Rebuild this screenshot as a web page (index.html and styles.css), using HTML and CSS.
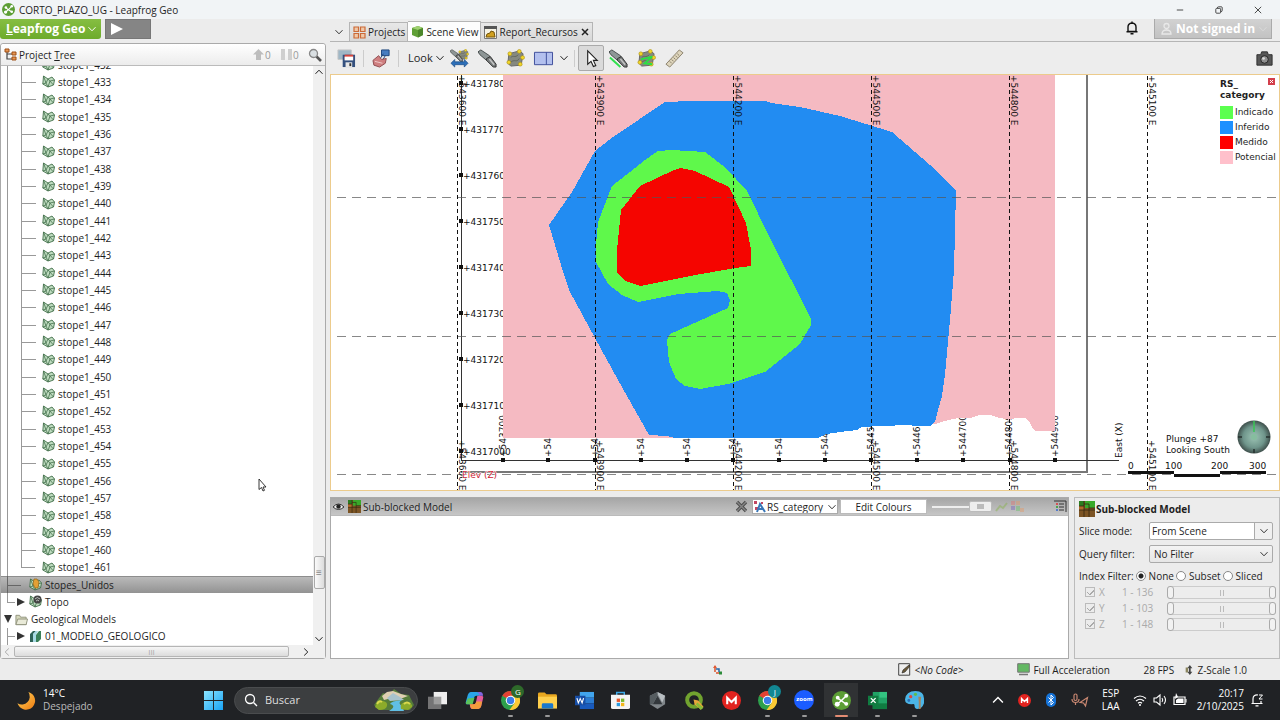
FILE: index.html
```html
<!DOCTYPE html>
<html lang="en">
<head>
<meta charset="utf-8">
<title>CORTO_PLAZO_UG - Leapfrog Geo</title>
<link rel="stylesheet" href="styles.css">
</head>
<body>
<svg class="defs" aria-hidden="true">
  <defs>
    <linearGradient id="gold" x1="0" y1="0" x2="1" y2="1"><stop offset="0" stop-color="#ffd45a"/><stop offset="1" stop-color="#ee7c12"/></linearGradient>
    <linearGradient id="win" x1="0" y1="0" x2="1" y2="1"><stop offset="0" stop-color="#8be4ff"/><stop offset="1" stop-color="#18a3f5"/></linearGradient>
    <radialGradient id="ball" cx=".5" cy=".5" r=".5"><stop offset="0" stop-color="#9cc4b4"/><stop offset=".65" stop-color="#6f958b"/><stop offset="1" stop-color="#3f504c"/></radialGradient>
    <symbol id="chev" viewBox="0 0 10 10"><path d="M1.500 3.200 5 6.800l3.500-3.600" fill="none" stroke="currentColor"/></symbol>
    <symbol id="mesh" viewBox="0 0 13 13"><path d="M1.500 1 6 4l4-2 2.500 3-1 5L6 12 .8 9z" fill="#bfdcc0" stroke="#44704c" stroke-width=".9"/><path d="M1.500 1 4 8l2-4 5.500 6M.8 9 4 8l2 4 2-6 4.500-1" fill="none" stroke="#44704c" stroke-width=".8"/></symbol>
    <symbol id="frog" viewBox="0 0 20 20"><circle cx="10" cy="10" r="10" fill="#5c9e35"/><path d="m5 14.500 5-4.500 5-5M6 7.500 9.500 10l5 3.500" stroke="#fff" stroke-width="1.600" fill="none"/><circle cx="6" cy="7" r="2" fill="#fff"/><circle cx="15" cy="5" r="2" fill="#fff"/><circle cx="15" cy="13.500" r="2" fill="#fff"/><circle cx="5.500" cy="14" r="2.600" fill="#fff"/></symbol>
    <symbol id="blocks" viewBox="0 0 16 16"><path d="M0 0h16v16H0z" fill="#7c5424"/><path d="M6 0h10v7H6z" fill="#39a92a"/><path d="M0 0h5v5H0z" fill="#2b7d20"/><path d="M0 5h5v4H0z" fill="#b06a2b"/><path d="M5 0v16M0 5h5M0 9h16M10 7v9M5 3h5v4h6" stroke="#33260f" fill="none" stroke-width=".8"/></symbol>
    <symbol id="knife" viewBox="0 0 20 20"><path d="M0 3 3 1l9 6 1 3-4 2-7-6z" fill="#8e9696" stroke="#454b4b"/><path d="m9 10 4-2 6 8v3h-3l-7-7z" fill="#777b7b" stroke="#333"/><path d="m12 10.500 5 6" stroke="#c4c4c4" stroke-width="1.500"/></symbol>
    <symbol id="slab" viewBox="0 0 20 20"><path d="m3 5 11-3 4 3-2 12-11 1-3-3z" fill="#85897f" stroke="#666"/><path d="M5 9c3-3 4 1 8-3M5 14c4-4 6 1 9-4" stroke="#62665c" fill="none"/><g fill="#f1d62a" stroke="#aa8d12" stroke-width=".6"><circle cx="4" cy="5" r="2"/><circle cx="14" cy="2.500" r="2"/><circle cx="17.500" cy="9" r="2"/><circle cx="15" cy="16" r="2"/><circle cx="3" cy="14" r="2"/></g></symbol>
    <symbol id="chrome" viewBox="0 0 20 20"><circle cx="10" cy="10" r="10" fill="#2da04c"/><path d="M10 10 1.340 5A10 10 0 0 1 18.660 5z" fill="#e34133"/><path d="M10 5h8.660A10 10 0 0 1 9 20l5.330-7.500z" fill="#fcc934"/><circle cx="10" cy="10" r="5" fill="#fff"/><circle cx="10" cy="10" r="3.900" fill="#3b7de8"/></symbol>
    <symbol id="mega" viewBox="0 0 20 20"><circle cx="10" cy="10" r="10" fill="#e2231f"/><path d="M5.500 14V7l4.500 4.500L14.500 7v7" fill="none" stroke="#fff" stroke-width="2.200"/></symbol>
  </defs>
</svg>

<header class="titlebar">
  <svg class="i13"><use href="#frog"/></svg>
  <h1>CORTO_PLAZO_UG - Leapfrog Geo</h1>
  <div class="winbtns">
    <button aria-label="Minimize"><svg viewBox="0 0 10 10"><path d="M1 5h8" /></svg></button>
    <button aria-label="Restore"><svg viewBox="0 0 10 10"><rect x="1" y="3" width="6" height="6" rx="1"/><path d="M3 2.500Q3 1 4.500 1H8q1 0 1 1v3.500Q9 7 7.500 7"/></svg></button>
    <button aria-label="Close"><svg viewBox="0 0 10 10"><path d="m1 1 8 8M9 1 1 9"/></svg></button>
  </div>
</header>

<main class="work">
  <section class="left">
    <div class="menubar">
      <button class="brand"><span><u>L</u>eapfrog Geo</span><svg class="i10"><use href="#chev"/></svg></button>
      <button class="play" aria-label="Run"><svg viewBox="0 0 12 12"><path d="m0 0 12 6-12 6z" fill="#fff"/></svg></button>
    </div>
    <div class="panel">
      <div class="panelhead">
        <svg class="i13" viewBox="0 0 13 13"><path d="M3 3v8h6M3 6h6" fill="none" stroke="#444" stroke-width="1.200"/><path d="M1 1h4v3H1zM8 4h4v3H8zM8 9h4v3H8z" fill="#e89550" stroke="#9c4f17"/></svg>
        <h2>Project <u>T</u>ree</h2>
        <span class="count"><svg class="i13" viewBox="0 0 13 13"><path d="M6.500 1 12 6.500H9V12H4V6.500H1z" fill="#bdbdbd"/></svg>0</span>
        <span class="count"><svg class="i13" viewBox="0 0 13 13"><path d="M1 1h4v11H1zM8 1h4v11H8z" fill="#cfcfcf"/></svg>0</span>
        <button class="plain" aria-label="Search tree"><svg class="i14" viewBox="0 0 14 14"><path d="m8 8 5 5" stroke="#555" stroke-width="2.600"/><circle cx="5.500" cy="5.500" r="4" fill="#d9dfe2" stroke="#888" stroke-width="1.300"/></svg></button>
      </div>
      <div class="treewrap">
        <ul class="tree">
          <li class="deep"><svg><use href="#mesh"/></svg>stope1_432</li>
          <li class="deep"><svg><use href="#mesh"/></svg>stope1_433</li>
          <li class="deep"><svg><use href="#mesh"/></svg>stope1_434</li>
          <li class="deep"><svg><use href="#mesh"/></svg>stope1_435</li>
          <li class="deep"><svg><use href="#mesh"/></svg>stope1_436</li>
          <li class="deep"><svg><use href="#mesh"/></svg>stope1_437</li>
          <li class="deep"><svg><use href="#mesh"/></svg>stope1_438</li>
          <li class="deep"><svg><use href="#mesh"/></svg>stope1_439</li>
          <li class="deep"><svg><use href="#mesh"/></svg>stope1_440</li>
          <li class="deep"><svg><use href="#mesh"/></svg>stope1_441</li>
          <li class="deep"><svg><use href="#mesh"/></svg>stope1_442</li>
          <li class="deep"><svg><use href="#mesh"/></svg>stope1_443</li>
          <li class="deep"><svg><use href="#mesh"/></svg>stope1_444</li>
          <li class="deep"><svg><use href="#mesh"/></svg>stope1_445</li>
          <li class="deep"><svg><use href="#mesh"/></svg>stope1_446</li>
          <li class="deep"><svg><use href="#mesh"/></svg>stope1_447</li>
          <li class="deep"><svg><use href="#mesh"/></svg>stope1_448</li>
          <li class="deep"><svg><use href="#mesh"/></svg>stope1_449</li>
          <li class="deep"><svg><use href="#mesh"/></svg>stope1_450</li>
          <li class="deep"><svg><use href="#mesh"/></svg>stope1_451</li>
          <li class="deep"><svg><use href="#mesh"/></svg>stope1_452</li>
          <li class="deep"><svg><use href="#mesh"/></svg>stope1_453</li>
          <li class="deep"><svg><use href="#mesh"/></svg>stope1_454</li>
          <li class="deep"><svg><use href="#mesh"/></svg>stope1_455</li>
          <li class="deep"><svg><use href="#mesh"/></svg>stope1_456</li>
          <li class="deep"><svg><use href="#mesh"/></svg>stope1_457</li>
          <li class="deep"><svg><use href="#mesh"/></svg>stope1_458</li>
          <li class="deep"><svg><use href="#mesh"/></svg>stope1_459</li>
          <li class="deep"><svg><use href="#mesh"/></svg>stope1_460</li>
          <li class="deep end"><svg><use href="#mesh"/></svg>stope1_461</li>
          <li class="mid selected"><svg viewBox="0 0 13 13"><use href="#mesh"/><path d="M5 1h3l2 3-1 6H6L4 6z" fill="#e3a035" stroke="#8d6212" stroke-width=".7"/></svg>Stopes_Unidos</li>
          <li class="mid last"><i class="arrow"></i><svg viewBox="0 0 13 13"><use href="#mesh"/><circle cx="8.500" cy="4.500" r="4" fill="#444"/><path d="M6 4q2-3 5 0M7 6q2-2 3 0" fill="none" stroke="#ddd" stroke-width=".8"/></svg>Topo</li>
          <li class="top"><i class="arrow open"></i><svg viewBox="0 0 14 13"><path d="M1 12V2h4l1 2h6v8z" fill="#d6d8bc" stroke="#90927c"/><path d="m1 12 2-6h10.500L12 12z" fill="#e9ead8" stroke="#90927c"/></svg>Geological Models</li>
          <li class="mid"><i class="arrow"></i><svg viewBox="0 0 13 13"><path d="M1 4 4 1h3L4 4v8H1z" fill="#2f6258"/><path d="m4 4 3-3h2L7 5v7H4z" fill="#a8d9e4"/><path d="m7 5 3-4h2v8l-3 3H7z" fill="#3a8059"/></svg>01_MODELO_GEOLOGICO</li>
        </ul>
        <div class="vscroll"><svg class="i10 up"><use href="#chev"/></svg><span class="vthumb">≡</span><svg class="i10"><use href="#chev"/></svg></div>
      </div>
      <div class="hscroll"><svg class="i10 lt"><use href="#chev"/></svg><span class="hthumb">III</span><svg class="i10 rt"><use href="#chev"/></svg></div>
    </div>
  </section>

  <section class="right">
    <div class="tabs">
      <button class="plain more" aria-label="Tab list"><svg class="i10"><use href="#chev"/></svg></button>
      <button class="tab"><svg class="i13" viewBox="0 0 13 13"><path d="M1 1h4.500v4.500H1zM7.500 1H12v4.500H7.500zM1 7.500h4.500V12H1zM7.500 7.500H12V12H7.500z" fill="#f0c8a8" stroke="#cc6a37" stroke-width="1.200"/></svg>Projects</button>
      <button class="tab active"><svg class="i13" viewBox="0 0 13 13"><path d="m1 3 6-2 5 2v7l-5 2.500L1 10z" fill="#5f9f36"/><path d="m1 3 6-2 5 2-5 2z" fill="#9fd070"/><path d="M7 5v7.500l5-2.500V3z" fill="#4b862a"/></svg>Scene View</button>
      <button class="tab"><svg class="i13" viewBox="0 0 13 13"><path d="M.5.5h12v12H.5z" fill="#f6f3e4" stroke="#777"/><path d="M0 0h13v3H0z" fill="#555"/><path d="m2 11 1-3 3-1 1-2 3 1 1 5z" fill="#d0a020" stroke="#765609"/></svg>Report_Recursos<svg class="i10" viewBox="0 0 10 10"><path d="m2 2 6 6m0-6-6 6" stroke="#222" stroke-width="1.500"/></svg></button>
      <button class="plain bell" aria-label="Notifications"><svg class="i14" viewBox="0 0 14 14"><path d="M3 10.500V6q0-3.500 4-4 4 .5 4 4v4.500zM1.500 10.800h11M7 .5V2M5.500 12.800h3" fill="none" stroke="#111" stroke-width="1.400"/></svg></button>
      <button class="account"><svg class="i13" viewBox="0 0 13 13"><path d="M2 12q0-4 4.500-4T11 12zM6.500 1.500a2.500 2.500 0 1 1 0 5 2.500 2.500 0 0 1 0-5z" fill="none" stroke="#e8e8e8" stroke-width="1.300"/></svg>Not signed in<svg class="i10"><use href="#chev"/></svg></button>
    </div>

    <div class="toolbar">
      <button aria-label="Save scene"><svg viewBox="0 0 20 20"><path d="M1 1h14v10H1z" fill="#9fb7c6" stroke="#c5c5c5"/><path d="M6 6h13v13H6z" fill="#34507e"/><path d="M8 6h9v5H8z" fill="#d8453c"/><path d="M8 8h9v4H8z" fill="#fff"/><path d="M9 14h7v5H9z" fill="#e7e7e7"/><path d="M13 15h2v3h-2z" fill="#333"/></svg></button>
      <i class="sep"></i>
      <button aria-label="Share"><svg viewBox="0 0 20 20"><path d="M10 1h8v6h-8z" fill="#467cc0" stroke="#1e447b"/><path d="m14 7-3 5M8 11l4-6" stroke="#1e447b"/><path d="m1 12 6-5 3 4 5-1-1 5-6 4-6-2z" fill="#cf7f80" stroke="#8e4b4e"/><path d="m3 13 8 2" stroke="#efcaca"/></svg></button>
      <i class="sep"></i>
      <button class="look">Look<svg class="i10"><use href="#chev"/></svg></button>
      <button aria-label="Slicer width"><svg viewBox="0 0 20 20"><g transform="translate(8) scale(.6)"><use href="#slab" width="20" height="20"/></g><g transform="scale(.7)"><use href="#knife" width="20" height="20"/></g><path d="m1 15 4-4v2.500h10V11l4 4-4 4v-2.500H5V19z" fill="#2d6fb8" stroke="#174a83" stroke-width=".7"/></svg></button>
      <button aria-label="Slicer"><svg><use href="#knife"/></svg></button>
      <button aria-label="Moving plane"><svg><use href="#slab"/></svg></button>
      <button aria-label="Split view"><svg viewBox="0 0 20 20"><path d="M.5 3.500h19v13H.5z" fill="#b3c0ee" stroke="#3c4c9a"/><path d="M13 3.500v13" stroke="#3c4c9a"/></svg></button>
      <button class="drop" aria-label="View options"><svg class="i10"><use href="#chev"/></svg></button>
      <i class="sep"></i>
      <button class="pressed" aria-label="Select"><svg viewBox="0 0 20 20"><path d="M6 2v14l3.500-3 2.500 5.500 2.500-1-2.500-5.500H16z" fill="#fff" stroke="#222" stroke-width="1.200"/></svg></button>
      <button aria-label="Draw slicer line"><svg viewBox="0 0 20 20"><use href="#knife"/><path d="m1 9 11 10" stroke="#2fe04c" stroke-width="2"/></svg></button>
      <button aria-label="Draw plane line"><svg viewBox="0 0 20 20"><use href="#slab"/><path d="m4 11 12-3-8 7 8 1" stroke="#2bdf45" stroke-width="2" fill="none"/></svg></button>
      <button aria-label="Ruler"><svg viewBox="0 0 20 20"><path d="M1 16 15 1l4 3L5 19z" fill="#ddd4bb" stroke="#8a816b"/><path d="m5 13 2 2m0-4 2 2m0-4 2 2m0-4 2 2m0-4 2 2" stroke="#8a816b"/></svg></button>
      <button class="camera" aria-label="Screenshot"><svg viewBox="0 0 20 20"><path d="M2 6h4l1-3h6l1 3h4v11H2z" fill="#575757" stroke="#2d2d2d"/><circle cx="10" cy="11" r="4" fill="#8f8f8f" stroke="#222"/><circle cx="9" cy="10" r="1.400" fill="#ddd"/></svg></button>
    </div>

    <div class="scene">
      <svg class="map" viewBox="331 75 948 415" preserveAspectRatio="xMidYMid slice">
        <g class="frame"><path d="M461 472H1087V70"/></g>
        <g class="axis"><path d="M461 70V460H1119"/></g>
        <g class="ylab">
          <text x="463" y="87">+431780</text><text x="463" y="133">+431770</text><text x="463" y="179">+431760</text><text x="463" y="225">+431750</text><text x="463" y="271">+431740</text><text x="463" y="317">+431730</text><text x="463" y="363">+431720</text><text x="463" y="409">+431710</text><text x="463" y="455">+4317000</text>
        </g>
        <g class="xlab">
          <text transform="translate(506 457) rotate(-90)">+543700</text><text transform="translate(551 457) rotate(-90)">+543800</text><text transform="translate(598 457) rotate(-90)">+543900</text><text transform="translate(644 457) rotate(-90)">+544000</text><text transform="translate(690 457) rotate(-90)">+544100</text><text transform="translate(736 457) rotate(-90)">+544200</text><text transform="translate(782 457) rotate(-90)">+544300</text><text transform="translate(828 457) rotate(-90)">+544400</text><text transform="translate(874 457) rotate(-90)">+544500</text><text transform="translate(920 457) rotate(-90)">+544600</text><text transform="translate(966 457) rotate(-90)">+544700</text><text transform="translate(1012 457) rotate(-90)">+544800</text><text transform="translate(1058 457) rotate(-90)">+544900</text>
        </g>
        <g class="ore">
          <path class="potencial" d="M503 70H1055V431H1036L1033 429L1030 423L1025 418L1015 418L1010 420L1000 418L990 415H980L970 418H958L945 421L935 424L900 418L800 430V438H503z"/>
          <path class="inferido" d="M665 102L690 101H766L771 103L800 107L840 116L892 132L930 165L956 190L954 270L950 320L945 375L942 396L938 410L935 422L930 426H914L909 425L880 426L862 427L857 430L840 432L826 434L818 438H675L667 436L649 435L618 380L595 338L570 292L564 275L549 225L572 192L595 151L613 137z"/>
          <path class="indicado" d="M658 151L672 150L705 152L726 168L747 191L770 238L811 319V325L800 344L765 372L728 384L700 389L685 386L676 379L669 362L667 340L670 334L728 308L730 300L727 293L718 291L678 294L638 302L622 295L608 284L596 262V245L598 222L612 186L630 172L645 160z"/>
          <path class="medido" d="M674 170L680 168L695 171L729 187L746 223L751 250V266L735 268L690 276L640 286L625 281L617 272V250L621 210L640 186z"/>
        </g>
        <g class="hgrid"><path d="M337 197H1279M337 336H1279M337 474H1279"/></g>
        <g class="vgrid"><path d="M457 76V490M595 76V490M733 76V490M871 76V490M1009 76V490M1147 76V490"/></g>
        <path class="ticks" d="M459 81h4v4h-4zM459 127h4v4h-4zM459 173h4v4h-4zM459 219h4v4h-4zM459 265h4v4h-4zM459 311h4v4h-4zM459 357h4v4h-4zM459 403h4v4h-4zM459 449h4v4h-4zM501 458h4v4h-4zM546 458h4v4h-4zM593 458h4v4h-4zM639 458h4v4h-4zM685 458h4v4h-4zM731 458h4v4h-4zM777 458h4v4h-4zM823 458h4v4h-4zM869 458h4v4h-4zM915 458h4v4h-4zM961 458h4v4h-4zM1008 458h4v4h-4zM1053 458h4v4h-4z"/>
        <g class="glab">
          <text transform="translate(459 75) rotate(90)">+543600 E</text><text transform="translate(597 75) rotate(90)">+543900 E</text><text transform="translate(735 75) rotate(90)">+544200 E</text><text transform="translate(873 75) rotate(90)">+544500 E</text><text transform="translate(1011 75) rotate(90)">+544800 E</text><text transform="translate(1149 75) rotate(90)">+545100 E</text>
          <text transform="translate(459 440) rotate(90)">+543600 E</text><text transform="translate(597 440) rotate(90)">+543900 E</text><text transform="translate(735 440) rotate(90)">+544200 E</text><text transform="translate(873 440) rotate(90)">+544500 E</text><text transform="translate(1011 440) rotate(90)">+544800 E</text><text transform="translate(1149 440) rotate(90)">+545100 E</text>
        </g>
        <g>
          <text class="elev" x="462" y="478">Elev (Z)</text>
          <text transform="translate(1122 458) rotate(-90)">East (X)</text>
          <text x="1166" y="442">Plunge +87</text><text x="1166" y="453">Looking South</text>
          <text x="1128" y="469">0</text><text x="1165" y="469">100</text><text x="1211" y="469">200</text><text x="1249" y="469">300</text>
        </g>
        <path d="M1128 471h46v3h46v-3h46v3h-46v3h-46v-3h-46z"/>
        <circle cx="1254" cy="437" r="16.500" fill="url(#ball)"/>
        <path d="M1254 421v11" stroke="#37c653" stroke-width="1.500"/><path d="M1238 437h4M1266 437h4M1254 449v4" stroke="#26302e" stroke-width="1.500"/><circle cx="1254" cy="437" r="3" fill="#86bd9f"/>
      </svg>
      <aside class="legend">
        <button class="close" aria-label="Close legend"><svg viewBox="0 0 7 7"><path d="m2 2 3 3m0-3L2 5" stroke="#fff"/></svg></button>
        <h3>RS_<br>category</h3>
        <ul>
          <li><i class="k-indicado"></i>Indicado</li>
          <li><i class="k-inferido"></i>Inferido</li>
          <li><i class="k-medido"></i>Medido</li>
          <li><i class="k-potencial"></i>Potencial</li>
        </ul>
      </aside>
    </div>

    <div class="bottom">
      <section class="shapes">
        <div class="shapebar">
          <svg class="i13" viewBox="0 0 13 13"><path d="M1 7q5.500-6 11 0-5.500 5-11 0z" fill="#eee" stroke="#333"/><circle cx="6.500" cy="6.500" r="2.200" fill="#222"/></svg>
          <svg class="i13 lead-gap"><use href="#blocks"/></svg>
          <span class="name">Sub-blocked Model</span>
          <button class="plain" aria-label="Remove"><svg class="i13" viewBox="0 0 13 13"><path d="m2 2 9 9m0-9-9 9" stroke="#4e4e4e" stroke-width="3.400"/><path d="m2 2 9 9m0-9-9 9" stroke="#858585" stroke-width="1.400"/></svg></button>
          <span class="combo cat"><svg class="lead" viewBox="0 0 13 13"><path d="M1 1h3v3H1zM2 7h3v3H2zM8 2h2v2H8z" fill="#c24763"/><path d="m4 12 3-8 5 8M5 9h5" fill="none" stroke="#3977b8" stroke-width="2"/></svg><select aria-label="Colour by"><option>RS_category</option></select><svg class="i10 dd"><use href="#chev"/></svg></span>
          <button class="edit">Edit Colours</button>
          <input class="opacity" type="range" aria-label="Opacity" value="100">
          <svg class="i13 faded" viewBox="0 0 13 13"><path d="m1 11 4-5 3 2 4-5" stroke="#86b246" fill="none" stroke-width="2"/></svg>
          <svg class="i13 faded" viewBox="0 0 13 13"><path d="M0 1h4v4H0z" fill="#d77"/><path d="M5 1h4v4H5zM9 8h4v4H9z" fill="#e29a69"/><path d="M0 6h4v4H0z" fill="#76b"/><path d="M5 6h4v5H5z" fill="#69c069"/></svg>
          <button class="plain listbtn" aria-label="Show legend"><svg class="i13" viewBox="0 0 13 13"><path d="M0 1h12v11" fill="none" stroke="#333"/><path d="M5 4h5M5 7h5M5 10h5" stroke="#333"/><path d="M2 4h2" stroke="#d33" stroke-width="1.500"/><path d="M2 7h2" stroke="#2a9c2a" stroke-width="1.500"/><path d="M2 10h2" stroke="#36c" stroke-width="1.500"/></svg></button>
        </div>
      </section>
      <section class="props">
        <h3><svg><use href="#blocks"/></svg>Sub-blocked Model</h3>
        <div class="field"><label for="slice">Slice mode:</label><span class="combo white"><select id="slice"><option>From Scene</option></select><svg class="i10 dd"><use href="#chev"/></svg></span></div>
        <div class="field"><label for="query">Query filter:</label><span class="combo"><select id="query"><option>No Filter</option></select><svg class="i10 dd"><use href="#chev"/></svg></span></div>
        <div class="radios"><span>Index Filter:</span><label><input type="radio" name="ix" checked>None</label><label><input type="radio" name="ix">Subset</label><label><input type="radio" name="ix">Sliced</label></div>
        <div class="range"><label><input type="checkbox" checked disabled>X</label><span>1 - 136</span><div class="dual"><input type="range" min="1" max="136" value="1" disabled aria-label="X from"><input type="range" min="1" max="136" value="136" disabled aria-label="X to"><b></b></div></div>
        <div class="range"><label><input type="checkbox" checked disabled>Y</label><span>1 - 103</span><div class="dual"><input type="range" min="1" max="103" value="1" disabled aria-label="Y from"><input type="range" min="1" max="103" value="103" disabled aria-label="Y to"><b></b></div></div>
        <div class="range"><label><input type="checkbox" checked disabled>Z</label><span>1 - 148</span><div class="dual"><input type="range" min="1" max="148" value="1" disabled aria-label="Z from"><input type="range" min="1" max="148" value="148" disabled aria-label="Z to"><b></b></div></div>
      </section>
    </div>
  </section>
  <svg class="pointer" viewBox="0 0 9 14"><path d="M1 1v10.500l2.500-2L5 13l1.500-.7L5 9h3z" fill="#fff" stroke="#222" stroke-width=".9"/></svg>
</main>

<footer class="status">
  <svg class="i10 axes" viewBox="0 0 10 10"><path d="M2 7V1M3 8h6" stroke="#d9532c" stroke-width="1.500"/><path d="M0 3h4L2 0z" fill="#e05a35"/><path d="M6 8h3" stroke="#2b8b39" stroke-width="3"/><path d="M3 4h3v3" stroke="#2668a8" stroke-width="1.500" fill="none"/></svg>
  <span class="code"><svg class="i13" viewBox="0 0 13 13"><path d="M.7.7h11v11.500H.7z" fill="#eee" stroke="#444"/><path d="m4 10 1-3 6-5 1 1-5 6z" fill="#6b5a3a" stroke="#222" stroke-width=".6"/></svg><em>&lt;No Code&gt;</em></span>
  <span class="accel"><svg class="i13" viewBox="0 0 13 13"><path d="M.7.7h11.600v8.500H.7z" fill="#63b863" stroke="#777"/><path d="M2 11.500h9" stroke="#777" stroke-width="1.500"/></svg>Full Acceleration</span>
  <span class="fps">28 FPS</span>
  <span class="zs"><svg class="i10" viewBox="0 0 10 12"><path d="M6 0 9 4H7v4h2l-3 4-3-4h2V4H3z" fill="#444"/><path d="M1 3h3v6H1z" fill="#8b8660"/></svg>Z-Scale 1.0</span>
</footer>

<nav class="taskbar">
  <button class="weather"><svg viewBox="0 0 20 20"><path d="M12 1a9.500 9.500 0 1 1-11.500 12A8.500 8.500 0 0 0 12 1z" fill="url(#gold)"/></svg><span>14°C<br><small>Despejado</small></span></button>
  <button class="start" aria-label="Start"><svg viewBox="0 0 20 20"><path d="M0 0h9.500v9.500H0zM10.500 0H20v9.500h-9.500zM0 10.500h9.500V20H0zM10.500 10.500H20V20h-9.500z" fill="url(#win)"/></svg></button>
  <label class="search"><svg class="i14" viewBox="0 0 14 14"><circle cx="6" cy="6" r="4.500" fill="none" stroke="#fff" stroke-width="1.300"/><path d="m9.500 9.500 3.500 3.500" stroke="#fff" stroke-width="1.300"/></svg><input type="text" placeholder="Buscar" aria-label="Buscar"><svg class="scenery" viewBox="0 0 40 22"><path d="M0 16 5 9l4-5 6 2 5-6 7 5 8 1 5 10-4 5H5z" fill="#567d3a"/><path d="M8 7 13 3l6-1 8 3 7 2-8 3-8-1-8 2z" fill="#dfcfb2"/><path d="m13 9 6-5 7 4 4 3-14 1z" fill="#a9c3cb"/><path d="M15 22q8-5 1-7 1-3 12-4-5 3 0 6l2 5z" fill="#60bfe4"/><path d="M1 18q2-7 8-6 5 1 4 5t-8 4zM27 20q-2-6 5-7 7 1 6 5l-4 3z" fill="#8cab2a"/><path d="M3 15q2-4 5-2M30 15q3-3 6 0" stroke="#d9d84c" fill="none" stroke-width="2"/></svg></label>
  <div class="apps">
    <button aria-label="Task view"><svg viewBox="0 0 20 20"><path d="M6 1h14v13H6z" fill="#eee"/><path d="M0 6h14v13H0z" fill="#8a8a8acc"/></svg></button>
    <button aria-label="Copilot"><svg viewBox="0 0 20 20"><path d="M6 1h7q2 0 2.500 2l.5 2h-4q-2 0-2.500 2L7 14H3q-3 0-2-3l2-7q1-3 3-3z" fill="#29a6e8"/><path d="M3 8 1 12q-.5 2 2 2h5l2-7z" fill="#5cc35a"/><path d="M14 19H8q-2 0-2.500-2L5 14h4q2 0 2.500-2L13 5h4q3 0 2 3l-2 8q-1 3-3 3z" fill="#e45b9a"/><path d="M5 14h4q2 0 2.500-2l.5-1h6l-1 5q-1 3-3 3H8q-2 0-3-5z" fill="#f29b3d"/><path d="M12 1q3 0 3 4h4q0-4-3-4z" fill="#8265df"/></svg></button>
    <button class="run" aria-label="Chrome G"><svg><use href="#chrome"/></svg><i class="avatar g">G</i></button>
    <button class="run" aria-label="File Explorer"><svg viewBox="0 0 20 20"><path d="M0 3q0-1.500 1.500-1.500H7l2 2h9.500q1.500 0 1.500 1.500v12H0z" fill="#e9a820"/><path d="M0 6h20v12.500H0z" fill="#ffd04d"/><path d="M4 14.500q0-1.500 1.500-1.500h9q1.500 0 1.500 1.500v4H4z" fill="#1b78cc"/></svg></button>
    <button aria-label="Word"><svg viewBox="0 0 20 20"><path d="M5 1h15v6H5z" fill="#41a5ee"/><path d="M5 7h15v6H5z" fill="#2b7cd3"/><path d="M5 13h15v6H5z" fill="#185abd"/><path d="M0 5h11v10H0z" fill="#174ea6"/><path d="m2 7.500 1.500 5L5.500 8l2 4.500L9 7.500" fill="none" stroke="#fff" stroke-width="1.200"/></svg></button>
    <button aria-label="Store"><svg viewBox="0 0 20 20"><path d="M6 5V1.500h8V5" fill="none" stroke="#3ba9e8" stroke-width="1.500"/><path d="M0 4h20v13q0 2-2 2H2q-2 0-2-2z" fill="#f4f4f4"/><path d="M6 8h3.500v3.500H6z" fill="#e8572b"/><path d="M10.500 8H14v3.500h-3.500z" fill="#78b82a"/><path d="M6 12.500h3.500V16H6z" fill="#2a9be0"/><path d="M10.500 12.500H14V16h-3.500z" fill="#f3b71b"/></svg></button>
    <button aria-label="Prism"><svg viewBox="0 0 20 20"><path d="m10 1 8 4v9l-8 5-8-5V5z" fill="#80868a"/><path d="m10 1 8 4-3 7-5-9z" fill="#b8bec2"/><path d="m10 5 5 9H5z" fill="#33383c"/><path d="m2 5 8-4v4L5 14H2z" fill="#555c60"/></svg></button>
    <button aria-label="QGIS"><svg viewBox="0 0 20 20"><circle cx="9.500" cy="9.500" r="7.200" fill="none" stroke="#71a32f" stroke-width="4.200"/><path d="m9 9 5 1 5.500 6.500-3 3L10 14z" fill="#e6a83a"/><path d="m13 12 6.500 5.500-3 2.500-5-6z" fill="#8abc38"/></svg></button>
    <button aria-label="Mega"><svg><use href="#mega"/></svg></button>
    <button class="run" aria-label="Chrome J"><svg><use href="#chrome"/></svg><i class="avatar j">J</i></button>
    <button class="run" aria-label="Zoom"><i class="zoom">zoom</i></button>
    <button class="run on" aria-label="Leapfrog Geo"><svg><use href="#frog"/></svg></button>
    <button class="run" aria-label="Excel"><svg viewBox="0 0 20 20"><path d="M5 1h15v18H5z" fill="#21a366"/><path d="M12 1h8v6h-8z" fill="#33c481"/><path d="M5 13h15v6H5z" fill="#107c41"/><path d="M0 5h11v10H0z" fill="#107c41"/><path d="m3 7.500 5 5m0-5-5 5" stroke="#fff" stroke-width="1.400"/></svg></button>
    <button class="run" aria-label="Paint"><svg viewBox="0 0 20 20"><path d="M11 0q9 0 9 8v5q-2 6-7 6-3 0-3-4 0-2-3-1-7 0-7-5 1-9 11-9z" fill="#4bb5e6"/><circle cx="6" cy="6" r="1.700" fill="#d94a3c"/><circle cx="11" cy="3.500" r="1.700" fill="#5fbd4b"/><circle cx="4" cy="10" r="1.500" fill="#2b72ba"/><path d="M14 6h3l-.5 5v8h-2v-8z" fill="#a6835c"/></svg></button>
  </div>
  <div class="tray">
    <button aria-label="Hidden icons"><svg class="i14 up"><use href="#chev"/></svg></button>
    <button aria-label="Mega sync"><svg class="i13"><use href="#mega"/></svg></button>
    <button aria-label="Bluetooth"><svg class="i14" viewBox="0 0 14 14"><rect x="2" width="10" height="14" rx="5" fill="#1573d8"/><path d="m4.500 4.500 5 5L7 12V2l2.500 2.500-5 5" fill="none" stroke="#fff"/></svg></button>
    <button aria-label="Microphone and location"><svg class="wide" viewBox="0 0 18 14"><path d="M3 2.500q0-1.500 1.500-1.500T6 2.500V6Q6 7.500 4.500 7.500T3 6zM1 6q0 3.500 3.500 3.500T8 6M4.500 9.500V12M9 9.500l7.500-5-2 8.500-2-3z" fill="none" stroke="#c98872" stroke-width="1.200"/></svg></button>
    <button class="lang">ESP<br>LAA</button>
    <button class="net" aria-label="Network, volume, battery"><svg class="i14" viewBox="0 0 14 14"><path d="M1 5.500q6-5 12 0M3 8q4-3.500 8 0M5 10.200q2-1.700 4 0" fill="none" stroke="#fff" stroke-width="1.200"/><circle cx="7" cy="12" r="1" fill="#fff"/></svg><svg class="i14" viewBox="0 0 14 14"><path d="M1 5h2.500L7 2v10L3.500 9H1zM9 5q1.500 2 0 4M11 3q3 4 0 8" fill="none" stroke="#fff" stroke-width="1.100"/></svg><svg class="i14" viewBox="0 0 14 14"><path d="M1 4h11v7.500H1z" fill="none" stroke="#fff" stroke-width="1.200"/><path d="M5 5.500h5.500V10H3V7zM12.500 6h1v3.500h-1zM3 0l2 4-3 2z" fill="#fff"/></svg></button>
    <button class="clock">20:17<br>2/10/2025</button>
    <button aria-label="Notifications"><svg class="i14" viewBox="0 0 14 14"><path d="M8 2Q3 1.500 3 6v4.500h8V8M1.500 10.500h11M5.500 12.800h3" fill="none" stroke="#fff" stroke-width="1.200"/><path d="M9 2h3.500L9 6h3.500" fill="none" stroke="#fff"/></svg></button>
  </div>
</nav>
</body>
</html>
```
FILE: styles.css
```css
* { box-sizing: border-box; }
body {
  margin: 0;
  height: 100vh;
  display: flex;
  flex-direction: column;
  font: 10px/14px "Open Sans", "Noto Sans", sans-serif;
  color: #1e1e1e;
  background: #ececec;
  overflow: hidden;
}
h1, h2, h3, ul { margin: 0; padding: 0; font: inherit; list-style: none; }
svg { display: block; flex: none; overflow: visible; }
button, select, input { font: inherit; color: inherit; margin: 0; }
button { border: 0; padding: 0; background: none; }
.defs { position: absolute; width: 0; height: 0; }
.i10 { width: 10px; height: 10px; }
.i13 { width: 13px; height: 13px; }
.i14 { width: 14px; height: 14px; }
.up { transform: rotate(180deg); }
.lt { transform: rotate(90deg); color: #aaa; }
.rt { transform: rotate(-90deg); }

.titlebar { height: 19px; display: flex; align-items: center; gap: 4px; padding: 0 3px 0 2px; background: #f1f4f6; }
.winbtns { margin-left: auto; display: flex; }
.winbtns button { width: 39px; display: grid; place-items: center; }
.winbtns svg { width: 8px; height: 8px; fill: none; stroke: #222; }

.work { flex: 1; min-height: 0; display: flex; gap: 4px; position: relative; }
.left { width: 326px; display: flex; flex-direction: column; gap: 4px; }
.menubar { height: 20px; display: flex; gap: 4px; }
.brand { width: 101px; display: flex; align-items: center; justify-content: space-between; padding: 0 4px 0 6px; background: linear-gradient(#86be42, #6dab2b); color: #fff; font-size: 12px; font-weight: 700; border-radius: 0 0 3px 3px; white-space: nowrap; }
.play { width: 46px; background: #858585; padding-left: 5px; border: 1px solid #777; }
.play svg { width: 12px; height: 12px; }
.panel { flex: 1; min-height: 0; display: flex; flex-direction: column; border: 1px solid #aaa; border-radius: 3px; background: #fff; }
.panelhead { height: 22px; flex: none; display: flex; align-items: center; gap: 2px; padding: 0 3px 0 3px; background: linear-gradient(#fff, #ececec); border-bottom: 1px solid #bbb; border-radius: 3px 3px 0 0; }
.panelhead h2 { flex: 1; }
.count { display: flex; align-items: center; width: 26px; color: #999; }
.treewrap { flex: 1; min-height: 0; display: flex; overflow: hidden; }
.tree { flex: 1; height: calc(100% + 10px); margin-top: -10px; display: flex; flex-direction: column; position: relative; }
.tree li { flex: 1; min-height: 0; display: flex; align-items: center; gap: 3px; position: relative; }
.tree li > svg { width: 13px; height: 13px; }
.tree li::before { content: ""; position: absolute; left: 6px; top: 0; bottom: 0; border-left: 1px solid #999; }
.tree .deep { padding-left: 41px; }
.tree .deep::after { content: ""; position: absolute; left: 20px; top: 50%; width: 14px; height: 100%; border-top: 1px solid #999; border-left: 1px solid #999; }
.tree .end::after { border-left: 0; }
.tree .mid { padding-left: 28px; }
.tree .mid::after { content: ""; position: absolute; left: 6px; top: 50%; width: 8px; border-top: 1px solid #999; }
.tree .selected { background: linear-gradient(#bcbcbc, #929292); box-shadow: inset 0 1px #8d8d8d; }
.tree .selected::before, .tree .selected::after { border-color: #666; }
.tree .selected::after { width: 14px; }
.tree .last::before { bottom: 50%; }
.tree .top { padding-left: 14px; }
.tree .top::before { border: 0; }
.arrow { position: absolute; left: 16px; border: 4px solid transparent; border-left: 8px solid #333; border-right: 0; }
.arrow.open { left: 3px; border: 4px solid transparent; border-top: 8px solid #333; border-bottom: 0; }
.vscroll { width: 12px; background: #f0f0f0; display: flex; flex-direction: column; align-items: center; padding: 1px 0; }
.vthumb { width: 11px; height: 33px; margin: auto 0 45px; background: linear-gradient(90deg, #fafafa, #dcdcdc); border: 1px solid #aaa; border-radius: 2px; color: #888; text-align: center; line-height: 30px; }
.hscroll { height: 13px; flex: none; display: flex; align-items: center; gap: 2px; padding: 0 14px 0 1px; background: #f0f0f0; }
.hscroll .rt { margin-left: auto; }
.hthumb { width: 275px; height: 11px; background: linear-gradient(#f6f6f6, #dcdcdc); border: 1px solid #b5b5b5; border-radius: 2px; color: #aaa; font-size: 8px; line-height: 9px; text-align: center; }

.right { flex: 1; min-width: 0; display: flex; flex-direction: column; }
.tabs { height: 23px; display: flex; align-items: flex-end; padding-right: 8px; border-bottom: 1px solid #b5b5b5; }
.more { width: 19px; height: 18px; padding-left: 4px; color: #333; }
.tab { height: 19px; display: flex; align-items: center; gap: 2px; padding: 0 2px 0 3px; background: linear-gradient(#e8e8e8, #d8d8d8); border: 1px solid #b5b5b5; border-bottom: 0; white-space: nowrap; }
.tab + .tab { border-left: 0; }
.tab.active { height: 20px; background: #fdfdfd; }
.bell { margin: 0 15px 6px auto; }
.account { width: 118px; height: 20px; align-self: flex-start; display: flex; align-items: center; gap: 3px; padding: 0 2px 0 5px; background: linear-gradient(#d2d2d2, #c2c2c2); border: 1px solid #aaa; border-top: 0; color: #fff; font-size: 12px; font-weight: 700; white-space: nowrap; }
.account .i10 { opacity: .3; }
.toolbar { height: 32px; display: flex; align-items: center; padding-left: 2px; background: #ededed; }
.toolbar button { width: 28px; height: 26px; display: grid; place-items: center; }
.toolbar button svg:not(.i10) { width: 19px; height: 19px; }
.sep { width: 1px; height: 17px; margin: 0 3px; background: #ccc; }
.toolbar .look { width: 43px; display: flex; align-items: center; gap: 2px; padding-left: 6px; font-size: 11px; }
.toolbar .drop { width: 14px; }
.toolbar .pressed { width: 26px; background: #dadada; border: 1px solid #aaa; border-radius: 2px; }
.toolbar .camera { margin-left: auto; width: 32px; }
.scene { flex: 1; min-height: 0; position: relative; background: #fff; border: 1px solid #eccb8c; overflow: hidden; }
.map { width: 100%; height: 100%; font: 9px "DejaVu Sans", sans-serif; fill: #111; }
.frame path { fill: none; stroke: #777; stroke-width: 2; }
.axis path { fill: none; stroke: #333; stroke-width: 1; shape-rendering: crispEdges; }
.potencial { fill: #f5bac2; }
.inferido { fill: #228cf2; }
.indicado { fill: #5ff84b; }
.medido { fill: #f50500; }
.ore { shape-rendering: crispEdges; }
.hgrid path { fill: none; stroke: #555; stroke-width: 1; stroke-dasharray: 9 6; opacity: .7; shape-rendering: crispEdges; }
.vgrid path { fill: none; stroke: #111; stroke-width: 1; stroke-dasharray: 4 3; shape-rendering: crispEdges; }
.elev { fill: #cc2233; paint-order: stroke; stroke: #fff; stroke-width: 1; }
.legend { position: absolute; top: 3px; right: 2px; width: 57px; font: 9px/11px "DejaVu Sans", sans-serif; }
.legend h3 { font-weight: 700; padding: 1px 0 4px; }
.legend li { display: flex; align-items: center; gap: 2px; height: 15px; white-space: nowrap; }
.legend i { width: 13px; height: 13px; flex: none; }
.k-indicado { background: #5bff4f; }
.k-inferido { background: #1e90ff; }
.k-medido { background: #f00; }
.k-potencial { background: #ffc0cb; }
.close { position: absolute; right: 2px; top: 0; width: 7px; height: 7px; background: #d33f4c; }
.close svg { width: 7px; height: 7px; }

.bottom { height: 168px; display: flex; gap: 5px; padding-top: 6px; }
.shapes { flex: 1; min-width: 0; background: #fff; border: 1px solid #aaa; }
.shapebar { height: 18px; display: flex; align-items: center; gap: 2px; padding: 0 1px; background: linear-gradient(#a6a6a6, #c6c6c6); border-bottom: 1px solid #bbb; }
.lead-gap { margin-left: 1px; }
.name { flex: 1; }
.combo { position: relative; display: flex; align-items: center; }
.combo select { appearance: none; width: 100%; height: 18px; padding: 0 16px 0 4px; border: 1px solid #aaa; border-radius: 2px; background: linear-gradient(#f3f3f3, #e6e6e6); }
.combo .dd { position: absolute; right: 4px; color: #333; pointer-events: none; }
.combo .lead { position: absolute; left: 1px; width: 13px; height: 13px; }
.combo.white select { background: linear-gradient(90deg, #fff calc(100% - 18px), #aaa calc(100% - 18px), #aaa calc(100% - 17px), #f0f0f0 calc(100% - 17px)); padding-left: 2px; }
.cat { width: 86px; margin-left: 2px; }
.combo.cat select { height: 15px; background: #fff; padding: 0 0 0 14px; border-radius: 0; }
.combo.cat .dd { right: 1px; }
.edit { width: 87px; height: 15px; background: #fff; border: 1px solid #bbb; }
.opacity { appearance: none; width: 60px; height: 12px; margin-left: 3px; background: linear-gradient(#eee, #eee) center / 100% 2px no-repeat; }
.opacity::-webkit-slider-thumb { appearance: none; width: 23px; height: 11px; border: 1px solid #bbb; border-radius: 2px; background: linear-gradient(90deg, transparent 7px, #bbb 7px, #bbb 14px, transparent 14px) center / 100% 5px no-repeat, #eee; }
.faded { opacity: .45; margin-left: 1px; }
.listbtn { margin-left: 28px; }
.props { width: 206px; padding: 3px 6px 0 4px; border: 1px solid #bbb; }
.props h3 { display: flex; align-items: center; gap: 1px; height: 16px; font-weight: 700; }
.props h3 svg { width: 16px; height: 16px; }
.field { display: flex; align-items: center; height: 23px; white-space: nowrap; }
.field:first-of-type { margin-top: 2px; }
.field label { width: 70px; }
.field .combo { flex: 1; }
.radios { display: flex; align-items: center; height: 16px; margin-top: 3px; gap: 2px; white-space: nowrap; }
.radios label { display: flex; align-items: center; gap: 3px; }
.radios input { appearance: none; width: 10px; height: 10px; border: 1px solid #888; border-radius: 50%; background: #fff; }
.radios input:checked { background: radial-gradient(#222 0 2px, #fff 3px); }
.range { display: flex; align-items: center; height: 16px; padding-left: 6px; color: #aaa; white-space: nowrap; }
.range label { width: 37px; display: flex; align-items: center; gap: 4px; }
.range span { width: 45px; }
.range label input { appearance: none; width: 10px; height: 10px; border: 1px solid #bbb; background: linear-gradient(135deg, transparent 45%, #aaa 45% 55%, transparent 55%) 4px 0 / 5px 8px no-repeat, linear-gradient(45deg, transparent 42%, #aaa 42% 58%, transparent 58%) 1px 4px / 3px 3px no-repeat; }
.dual { flex: 1; position: relative; height: 13px; border: 1px solid #ccc; border-radius: 3px; margin-right: -3px; background: #ededed; }
.dual input { position: absolute; inset: -1px; width: calc(100% + 2px); height: 13px; appearance: none; background: none; }
.dual input::-webkit-slider-thumb { appearance: none; width: 7px; height: 13px; border: 1px solid #aaa; border-radius: 3px; background: #f2f2f2; }
.dual b { position: absolute; left: calc(50% - 2px); top: 3px; width: 4px; height: 6px; border: 1px solid #bbb; border-width: 0 1px; }
.pointer { position: absolute; left: 258px; top: 459px; width: 9px; height: 14px; }

.status { height: 21px; flex: none; display: flex; align-items: center; padding-right: 33px; white-space: nowrap; }
.status span { display: flex; align-items: center; gap: 3px; }
.axes { margin-left: 713px; }
.code { margin-left: auto; width: 119px; }
.accel { width: 126px; }
.fps { width: 41px; }

.taskbar { height: 40px; flex: none; display: flex; align-items: center; background: #202225; color: #fff; padding: 0 16px 0 17px; }
.taskbar button { display: grid; place-items: center; position: relative; }
.taskbar .weather { display: flex; gap: 7px; width: 187px; text-align: left; line-height: 13px; }
.weather svg { width: 19px; height: 19px; }
.weather small { font-size: 10px; color: #bbb; }
.start svg { width: 19px; height: 19px; }
.search { width: 184px; height: 27px; margin-left: 11px; padding: 0 3px 0 9px; display: flex; align-items: center; gap: 7px; background: #3c3e40; border: 1px solid #4a4c4e; border-radius: 14px; }
.search input { flex: 1; min-width: 0; border: 0; padding: 0; background: none; font-size: 11px; }
.search input::placeholder { color: #ddd; }
.scenery { width: 40px; height: 22px; }
.apps { width: 514px; height: 40px; margin-left: 1px; display: grid; grid-template-columns: repeat(14, 1fr); }
.apps svg { width: 19px; height: 19px; }
.run::after { content: ""; position: absolute; bottom: 3px; width: 5px; height: 2px; border-radius: 1px; background: #999; }
.apps .on { background: linear-gradient(#303234, #303234) center / 34px 34px no-repeat; }
.on::after { width: 13px; background: #e38c73; }
.avatar { position: absolute; left: 19px; top: 5px; width: 13px; height: 13px; border-radius: 50%; font: 8px/13px "Open Sans", sans-serif; text-align: center; }
.g { background: #2e6a2a; }
.j { background: #128793; }
.zoom { width: 20px; height: 20px; border-radius: 50%; background: #1b5cff; font: 700 6px/19px "Open Sans", sans-serif; text-align: center; }
.tray { margin-left: auto; display: flex; align-items: center; gap: 13px; white-space: nowrap; line-height: 13px; }
.wide { width: 18px; height: 14px; }
.tray .net { display: flex; gap: 6px; }
.tray .clock { text-align: right; margin: 0 -7px 0 -3px; }
```
